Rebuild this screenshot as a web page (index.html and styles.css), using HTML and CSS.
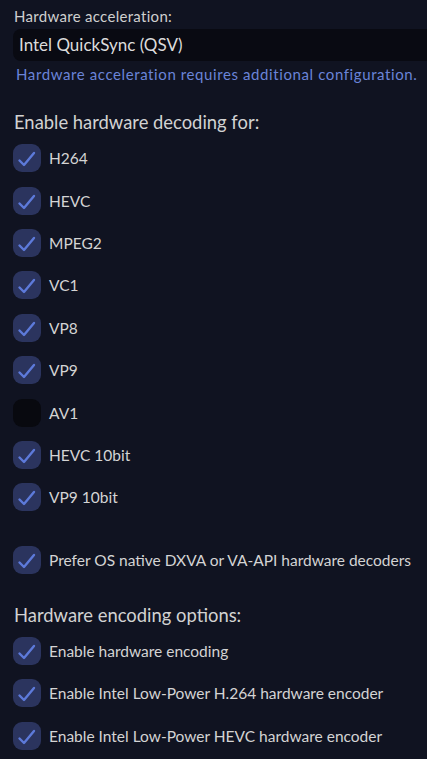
FILE: index.html
```html
<!DOCTYPE html>
<html>
<head>
<meta charset="utf-8">
<link rel="stylesheet" href="styles.css">
</head>
<body>
<div class="page">
  <div class="field">
    <label class="field-label">Hardware acceleration:</label>
    <div class="select">Intel QuickSync (QSV)</div>
    <div class="help">Hardware acceleration requires additional configuration.</div>
  </div>

  <h3 class="section-title">Enable hardware decoding for:</h3>
  <div class="checklist">
    <div class="check-row"><span class="box on"><svg viewBox="0 0 28 28"><path d="M6.5 16.5 L11 21 L21 9"/></svg></span><span class="lbl">H264</span></div>
    <div class="check-row"><span class="box on"><svg viewBox="0 0 28 28"><path d="M6.5 16.5 L11 21 L21 9"/></svg></span><span class="lbl">HEVC</span></div>
    <div class="check-row"><span class="box on"><svg viewBox="0 0 28 28"><path d="M6.5 16.5 L11 21 L21 9"/></svg></span><span class="lbl">MPEG2</span></div>
    <div class="check-row"><span class="box on"><svg viewBox="0 0 28 28"><path d="M6.5 16.5 L11 21 L21 9"/></svg></span><span class="lbl">VC1</span></div>
    <div class="check-row"><span class="box on"><svg viewBox="0 0 28 28"><path d="M6.5 16.5 L11 21 L21 9"/></svg></span><span class="lbl">VP8</span></div>
    <div class="check-row"><span class="box on"><svg viewBox="0 0 28 28"><path d="M6.5 16.5 L11 21 L21 9"/></svg></span><span class="lbl">VP9</span></div>
    <div class="check-row"><span class="box off"></span><span class="lbl">AV1</span></div>
    <div class="check-row"><span class="box on"><svg viewBox="0 0 28 28"><path d="M6.5 16.5 L11 21 L21 9"/></svg></span><span class="lbl">HEVC 10bit</span></div>
    <div class="check-row"><span class="box on"><svg viewBox="0 0 28 28"><path d="M6.5 16.5 L11 21 L21 9"/></svg></span><span class="lbl">VP9 10bit</span></div>
  </div>

  <div class="checklist single">
    <div class="check-row"><span class="box on"><svg viewBox="0 0 28 28"><path d="M6.5 16.5 L11 21 L21 9"/></svg></span><span class="lbl">Prefer OS native DXVA or VA-API hardware decoders</span></div>
  </div>

  <h3 class="section-title enc">Hardware encoding options:</h3>
  <div class="checklist">
    <div class="check-row"><span class="box on"><svg viewBox="0 0 28 28"><path d="M6.5 16.5 L11 21 L21 9"/></svg></span><span class="lbl">Enable hardware encoding</span></div>
    <div class="check-row"><span class="box on"><svg viewBox="0 0 28 28"><path d="M6.5 16.5 L11 21 L21 9"/></svg></span><span class="lbl">Enable Intel Low-Power H.264 hardware encoder</span></div>
    <div class="check-row"><span class="box on"><svg viewBox="0 0 28 28"><path d="M6.5 16.5 L11 21 L21 9"/></svg></span><span class="lbl">Enable Intel Low-Power HEVC hardware encoder</span></div>
  </div>
</div>
</body>
</html>
```

FILE: styles.css
```css
html, body {
  margin: 0;
  padding: 0;
  background: #101321;
  overflow: hidden;
}
body {
  font-family: "Lato", "Noto Sans", sans-serif;
  color: #d6d6d6;
}
.page {
  padding: 6px 0 0 13px;
}
.field-label {
  display: block;
  font-size: 15px;
  letter-spacing: 0.3px;
  line-height: 20px;
  padding-left: 1px;
  color: #cfcfcf;
}
.select {
  margin-top: 3px;
  height: 32px;
  line-height: 32px;
  background: #090a12;
  border-radius: 8px 0 0 8px;
  padding-left: 6px;
  font-size: 17px;
  color: #dcdcdc;
}
.help {
  margin-top: 3px;
  padding-left: 3px;
  font-size: 15px;
  line-height: 20px;
  color: #6a84d8;
  letter-spacing: 0.6px;
}
.section-title {
  margin: 26px 0 0 1px;
  font-size: 18.4px;
  font-weight: normal;
  line-height: 24px;
  color: #d2d2d2;
}
.section-title.enc {
  margin-top: 22px;
}
.checklist {
  display: flex;
  flex-direction: column;
  margin-top: 3px;
}
.checklist.single {
  margin-top: 20px;
}
.check-row {
  display: flex;
  align-items: center;
  gap: 8px;
  height: 42.4px;
}
.box {
  width: 28px;
  height: 28px;
  border-radius: 9px;
  flex: none;
  display: flex;
}
.box.on {
  background: #2b345e;
}
.box.off {
  background: #08090f;
}
.box svg {
  width: 28px;
  height: 28px;
}
.box path {
  fill: none;
  stroke: #5d7ada;
  stroke-width: 2.4;
  stroke-linecap: round;
  stroke-linejoin: round;
}
.lbl {
  font-size: 15.5px;
  color: #d4d4d4;
}
```
